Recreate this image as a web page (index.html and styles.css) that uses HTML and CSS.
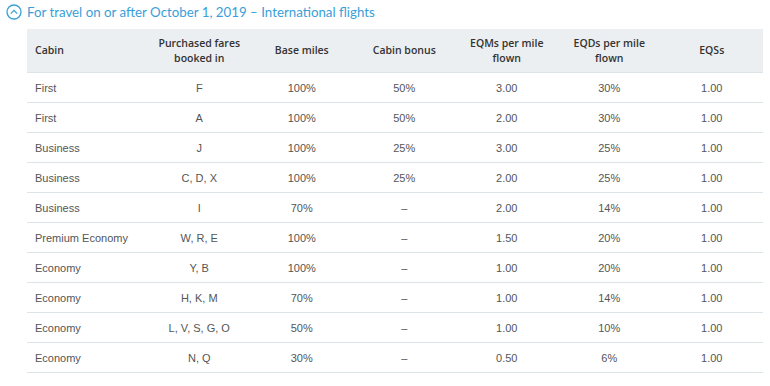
FILE: index.html
```html
<!DOCTYPE html>
<html lang="en">
<head>
    <meta charset="UTF-8">
    <title>Earning miles - International flights</title>
    <link rel="stylesheet" href="styles.css">
</head>
<body>
<div class="section">
    <div class="section-title">
        <svg class="toggle-icon" width="16" height="16" viewBox="0 0 16 16">
            <circle cx="8" cy="8" r="7" fill="none" stroke="#3a9ed8" stroke-width="1.3"/>
            <path d="M4.8 9.6 L8 6.4 L11.2 9.6" fill="none" stroke="#3a9ed8" stroke-width="1.3"/>
        </svg>
        <span>For travel on or after October 1, 2019 &ndash; International flights</span>
    </div>

    <table class="miles-table">
        <thead>
            <tr>
                <th class="cabin">Cabin</th>
                <th>Purchased fares<br>booked in</th>
                <th>Base miles</th>
                <th>Cabin bonus</th>
                <th>EQMs per mile<br>flown</th>
                <th>EQDs per mile<br>flown</th>
                <th>EQSs</th>
            </tr>
        </thead>
        <tbody>
            <tr><td class="cabin">First</td><td>F</td><td>100%</td><td>50%</td><td>3.00</td><td>30%</td><td>1.00</td></tr>
            <tr><td class="cabin">First</td><td>A</td><td>100%</td><td>50%</td><td>2.00</td><td>30%</td><td>1.00</td></tr>
            <tr><td class="cabin">Business</td><td>J</td><td>100%</td><td>25%</td><td>3.00</td><td>25%</td><td>1.00</td></tr>
            <tr><td class="cabin">Business</td><td>C, D, X</td><td>100%</td><td>25%</td><td>2.00</td><td>25%</td><td>1.00</td></tr>
            <tr><td class="cabin">Business</td><td>I</td><td>70%</td><td>&ndash;</td><td>2.00</td><td>14%</td><td>1.00</td></tr>
            <tr><td class="cabin">Premium Economy</td><td>W, R, E</td><td>100%</td><td>&ndash;</td><td>1.50</td><td>20%</td><td>1.00</td></tr>
            <tr><td class="cabin">Economy</td><td>Y, B</td><td>100%</td><td>&ndash;</td><td>1.00</td><td>20%</td><td>1.00</td></tr>
            <tr><td class="cabin">Economy</td><td>H, K, M</td><td>70%</td><td>&ndash;</td><td>1.00</td><td>14%</td><td>1.00</td></tr>
            <tr><td class="cabin">Economy</td><td>L, V, S, G, O</td><td>50%</td><td>&ndash;</td><td>1.00</td><td>10%</td><td>1.00</td></tr>
            <tr><td class="cabin">Economy</td><td>N, Q</td><td>30%</td><td>&ndash;</td><td>0.50</td><td>6%</td><td>1.00</td></tr>
        </tbody>
    </table>
</div>
</body>
</html>
```

FILE: styles.css
```css
body {
    margin: 0;
    padding: 0;
    background-color: #fff;
    font-family: "Liberation Sans", Arial, sans-serif;
}

.section {
    padding: 2px 7px 0 6px;
}

.section-title {
    display: flex;
    align-items: center;
    gap: 5px;
    height: 20px;
    color: #3a9ed8;
    font-family: Lato, sans-serif;
    font-size: 13.3px;
    cursor: pointer;
}

.toggle-icon {
    flex-shrink: 0;
    margin-left: 0;
    margin-bottom: 1px;
}

.section-title span {
    margin-bottom: 1px;
}

.miles-table {
    margin: 7px 0 0 21px;
    width: 736px;
    border-collapse: collapse;
    table-layout: fixed;
}

.miles-table th {
    height: 43px;
    padding: 0 4px;
    background-color: #eceff1;
    color: #333;
    font-family: "Open Sans", sans-serif;
    font-weight: 600;
    font-size: 10.5px;
    line-height: 15px;
    text-align: center;
    border-bottom: 1px solid #dde4e8;
}

.miles-table td {
    height: 29px;
    padding: 0 4px;
    color: #555;
    font-size: 11px;
    text-align: center;
    border-bottom: 1px solid #dde4e8;
}

.miles-table th.cabin,
.miles-table td.cabin {
    width: 109px;
    padding-left: 8px;
    text-align: left;
}
```
